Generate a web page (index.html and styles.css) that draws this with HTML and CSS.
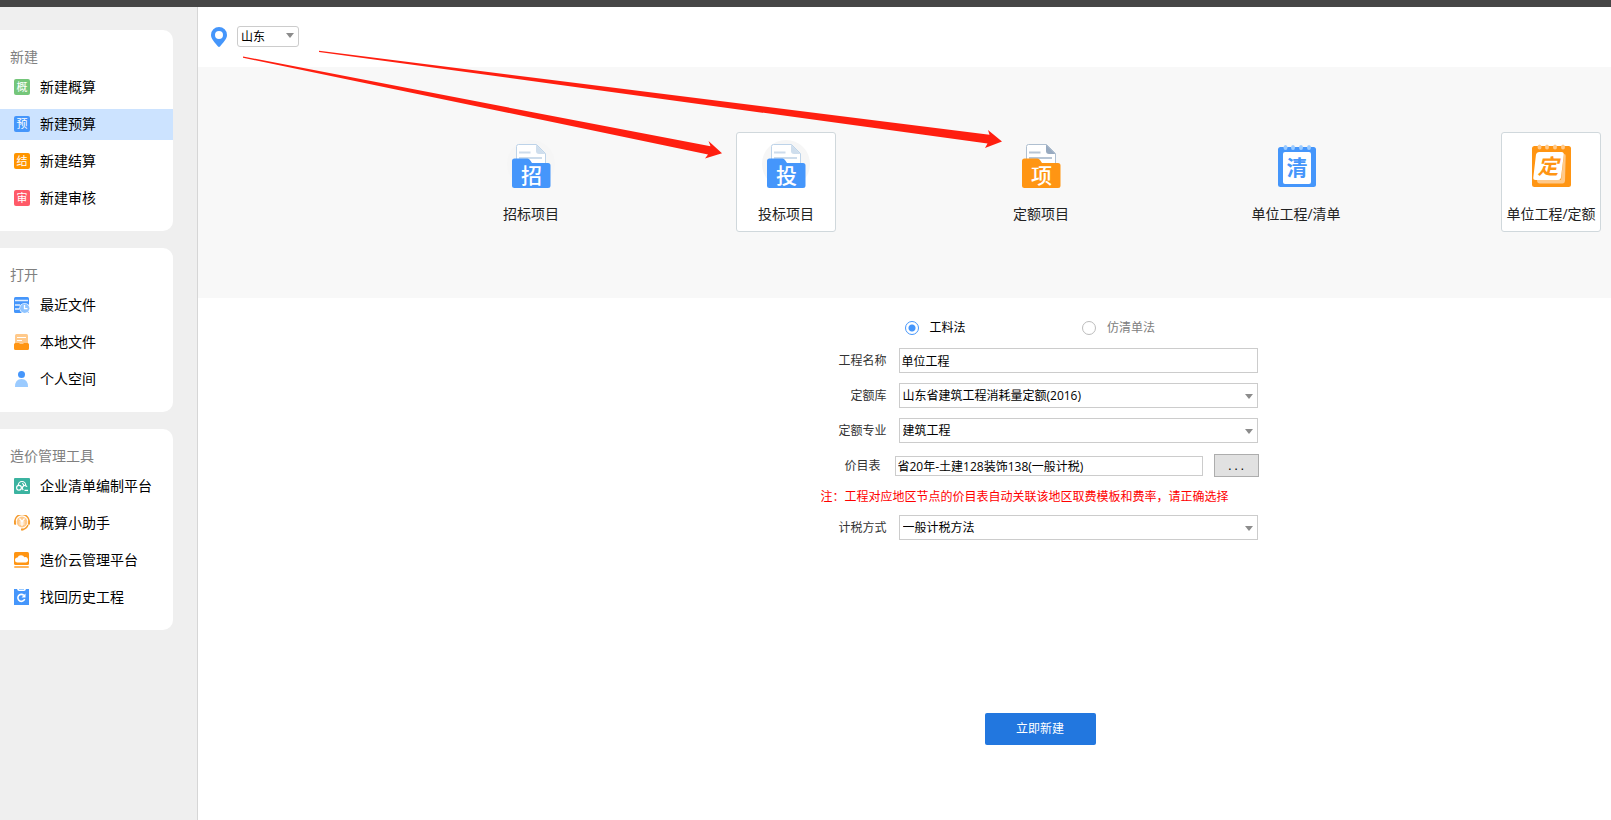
FILE: index.html
```html
<!DOCTYPE html>
<html lang="zh-CN">
<head>
<meta charset="utf-8">
<title>新建预算</title>
<link rel="stylesheet" href="styles.css">
</head>
<body>
<svg class="defs" width="0" height="0" aria-hidden="true">
  <defs>
    <symbol id="folder" viewBox="0 0 48 48">
      <circle class="halo" cx="24" cy="24" r="24"/>
      <path class="sheet" d="M9.500 28V6.500q0-2 2-2h18l9 9V28z"/>
      <path class="fold" d="M29 4.500V11q0 3 3 3h6.500z"/>
      <path class="rule" d="M12 12.500h11.500M12 18h23"/>
      <path class="front" d="M5 21q0-2.500 2.500-2.500h13q1.500 0 2.500 1.500l2 3h16q2.500 0 2.500 2.500v20q0 2.500-2.500 2.500H7.500Q5 48 5 45.500z"/>
    </symbol>
  </defs>
</svg>
<div class="titlebar"></div>
<div class="app">
  <aside class="sidebar">
    <nav class="panel" aria-label="新建">
      <h2 class="panel-title">新建</h2>
      <a class="item" href="#"><span class="badge green">概</span>新建概算</a>
      <a class="item active" href="#"><span class="badge blue">预</span>新建预算</a>
      <a class="item" href="#"><span class="badge orange">结</span>新建结算</a>
      <a class="item" href="#"><span class="badge red">审</span>新建审核</a>
    </nav>
    <nav class="panel" aria-label="打开">
      <h2 class="panel-title">打开</h2>
      <a class="item" href="#"><svg class="icon" viewBox="0 0 16 16"><rect width="15" height="16" rx="1.500" fill="#4596fb"/><path d="M1 3.500h13M1 8h5M1 12h4" stroke="#e3effe" stroke-width="1.300"/><circle cx="10.700" cy="11.300" r="5.400" fill="#fff"/><circle cx="10.700" cy="11.300" r="4.700" fill="#8fc4ff"/><path d="M10.500 8v3.700h3" fill="none" stroke="#fff" stroke-width="1.300"/></svg>最近文件</a>
      <a class="item" href="#"><svg class="icon" viewBox="0 0 16 16"><rect x="1" width="13" height="11" rx="1.500" fill="#ffc98a"/><path d="M3 3.500h9M3 6.500h5" stroke="#fff"/><path d="M0 10.500Q0 9 1.500 9H5l1 1h3l1-1h3.500Q15 9 15 10.500v4q0 1.500-1.500 1.500h-12Q0 16 0 14.500z" fill="#ff9513"/></svg>本地文件</a>
      <a class="item" href="#"><svg class="icon" viewBox="0 0 16 16"><path d="M1 16q0-8 6.500-8T14 16z" fill="#9bcbff"/><circle cx="7.500" cy="3.500" r="3.500" fill="#4596fb"/></svg>个人空间</a>
    </nav>
    <nav class="panel" aria-label="造价管理工具">
      <h2 class="panel-title">造价管理工具</h2>
      <a class="item" href="#"><svg class="icon" viewBox="0 0 16 16"><rect width="16" height="16" rx="1" fill="#3bb3a0"/><g fill="none" stroke="#fff" stroke-width="1.200"><path d="M4.300 7.200a3.700 3.700 0 0 1 7.400 0"/><circle cx="5" cy="9.800" r="2.400"/><path d="M8 5.500a1.800 1.800 0 0 1 1 3.200M9.300 12a2.500 2.500 0 1 1 3.700-3.200M10.500 12.300H14"/></g></svg>企业清单编制平台</a>
      <a class="item" href="#"><svg class="icon" viewBox="0 0 16 16"><circle cx="8" cy="7" r="5.400" fill="#ffc98a"/><path d="M1.700 9.500A7 7 0 1 1 14.300 9.500M14 10q-1.500 4-6 4.600" fill="none" stroke="#f59b2d" stroke-width="1.400"/><path d="M0 5.500h1.700v4H0zM14.300 5.500H16v4h-1.700zM7 13.500h2.500v2H7z" fill="#f59b2d"/><path d="M5.500 3.500 8 6.500l2.500-3M5.500 7h5M5.500 9h5M8 6.500v4.500" fill="none" stroke="#fff" stroke-width="1.200"/></svg>概算小助手</a>
      <a class="item" href="#"><svg class="icon" viewBox="0 0 16 16"><rect width="15" height="13" rx="1.500" fill="#ff9513"/><path d="M3.500 10.500a2.500 2.500 0 0 1 0-5 4 4 0 0 1 7-.300 2.700 2.700 0 0 1 1.500 5.300z" fill="#fff"/><rect y="14" width="15" height="2" rx="1" fill="#ffb55c"/></svg>造价云管理平台</a>
      <a class="item" href="#"><svg class="icon" viewBox="0 0 16 16"><path d="M0 0h15v16H0z" fill="#4596fb"/><path d="M3 0q.500 2 2 2h5q1.500 0 2-2z" fill="#fff"/><path d="M5 0h5v1H5z" fill="#9bcbff"/><path d="M9.800 6.300A3.500 3.500 0 1 0 10.700 10" fill="none" stroke="#fff" stroke-width="1.600"/><path d="M11.500 4.500v4H7.500z" fill="#fff"/></svg>找回历史工程</a>
    </nav>
  </aside>

  <main class="main">
    <header class="region">
      <svg class="pin" viewBox="0 0 16 20" aria-hidden="true"><path fill-rule="evenodd" d="M8 0a8 8 0 0 1 8 8c0 4.500-5 8.500-6.800 11.300q-1.200 1.400-2.400 0C5 16.500 0 12.500 0 8a8 8 0 0 1 8-8zm0 4a4 4 0 1 0 0 8 4 4 0 0 0 0-8z" fill="#4596fb"/></svg>
      <span class="select small"><select aria-label="地区"><option>山东</option></select></span>
    </header>

    <section class="kinds">
      <button class="kind blue-kind" type="button">
        <svg class="kind-icon" viewBox="0 0 48 48"><use href="#folder"/><text class="glyph" x="24.500" y="43">招</text></svg>招标项目</button>
      <button class="kind blue-kind card" type="button">
        <svg class="kind-icon" viewBox="0 0 48 48"><use href="#folder"/><text class="glyph" x="24.500" y="43">投</text></svg>投标项目</button>
      <button class="kind orange-kind" type="button">
        <svg class="kind-icon" viewBox="0 0 48 48"><use href="#folder"/><text class="glyph" x="24.500" y="43">项</text></svg>定额项目</button>
      <button class="kind" type="button">
        <svg class="kind-icon" viewBox="0 0 48 48"><rect x="6" y="7" width="38" height="40" rx="2.500" fill="#4596fb"/><rect x="11" y="12" width="28" height="32" rx="2" fill="#fff"/><g fill="#9bcbff"><ellipse cx="13.500" cy="7.500" rx="2" ry="2.500"/><ellipse cx="21" cy="7.500" rx="2" ry="2.500"/><ellipse cx="29" cy="7.500" rx="2" ry="2.500"/><ellipse cx="37" cy="7.500" rx="2" ry="2.500"/></g><text class="glyph blue-glyph" x="25" y="35">清</text></svg>单位工程/清单</button>
      <button class="kind card" type="button">
        <svg class="kind-icon" viewBox="0 0 48 48"><rect x="5" y="6" width="39" height="41" rx="2.500" fill="#ff9513"/><path d="M10 40h24l3-26q2 0 1.700 2L38 41q-.300 2.500-2.500 2.500H13q-3 0-3-3.500z" fill="#ffc98a"/><path d="M12 12h22.500q2.500 0 2.300 2.500L34 37.500q-.300 2.500-2.700 2.500H8.500Q6 40 6.300 37.500L9 14.500Q9.500 12 12 12z" fill="#fff"/><g fill="#ffc98a"><ellipse cx="12.500" cy="7" rx="2" ry="2.500"/><ellipse cx="20" cy="7" rx="2" ry="2.500"/><ellipse cx="28" cy="7" rx="2" ry="2.500"/><ellipse cx="36" cy="7" rx="2" ry="2.500"/></g><text class="glyph orange-glyph" x="21" y="34">定</text></svg>单位工程/定额</button>
    </section>

    <form class="form">
      <div class="methods">
        <label class="method"><input type="radio" name="method" checked>工料法</label>
        <label class="method muted"><input type="radio" name="method">仿清单法</label>
      </div>
      <div class="row"><label for="name">工程名称</label><input id="name" class="text" type="text" value="单位工程"></div>
      <div class="row"><label for="lib">定额库</label><span class="select"><select id="lib"><option>山东省建筑工程消耗量定额(2016)</option></select></span></div>
      <div class="row"><label for="major">定额专业</label><span class="select"><select id="major"><option>建筑工程</option></select></span></div>
      <div class="row price"><label for="price">价目表</label><input id="price" class="text" type="text" value="省20年-土建128装饰138(一般计税)"><button class="browse" type="button" aria-label="选择价目表">. . .</button></div>
      <p class="note">注：工程对应地区节点的价目表自动关联该地区取费模板和费率，请正确选择</p>
      <div class="row"><label for="tax">计税方式</label><span class="select"><select id="tax"><option>一般计税方法</option></select></span></div>
      <button class="create" type="button">立即新建</button>
    </form>

    <svg class="arrows" width="820" height="170" viewBox="198 7 820 170" aria-hidden="true">
      <path d="M243 56.500 710.500 146.300 708.500 141 722 153.300 705 158.500 708 154.500 243 57.700z"/>
      <path d="M319 50.700 989.500 134.700 988 130 1002 141.500 985 148 987.500 143.500 319 51.900z"/>
    </svg>
  </main>
</div>
</body>
</html>
```
FILE: styles.css
```css
* { box-sizing: border-box; }

body {
  margin: 0;
  min-height: 100vh;
  display: flex;
  flex-direction: column;
  font-family: "Open Sans", "Noto Sans CJK SC", sans-serif;
  font-size: 12px;
  line-height: 16px;
  color: #000;
  background: #fff;
}

button, input, select { font: inherit; color: inherit; }

.defs { position: absolute; }

.titlebar { height: 7px; background: #464646; }

.app { flex: 1; display: flex; }

/* Sidebar */
.sidebar {
  width: 198px;
  flex: none;
  padding: 23px 24px 23px 0;
  display: flex;
  flex-direction: column;
  gap: 17px;
  background: #efefef;
  border-right: 1px solid #d6d6d6;
}

.panel {
  display: flex;
  flex-direction: column;
  gap: 6px;
  padding: 18px 0 17px;
  border-radius: 0 10px 10px 0;
  background: #fff;
}

.panel-title {
  margin: 0;
  padding-left: 10px;
  font-size: 14px;
  font-weight: 400;
  line-height: 18px;
  color: #808080;
}

.item {
  display: flex;
  align-items: center;
  gap: 10px;
  height: 31px;
  padding: 0 0 1px 14px;
  font-size: 14px;
  color: #000;
  text-decoration: none;
}

.item.active { background: #cce3ff; }

.icon { width: 16px; height: 16px; flex: none; }

.badge {
  width: 16px;
  height: 16px;
  flex: none;
  border-radius: 2px;
  font-size: 11px;
  line-height: 16px;
  text-align: center;
  color: #fff;
}

.green { background: #74c67a; }
.blue { background: #4596fb; }
.orange { background: #ff9500; }
.red { background: #ff5a68; }

/* Main area */
.main {
  position: relative;
  flex: 1;
  min-width: 0;
  display: flex;
  flex-direction: column;
}

.region {
  display: flex;
  align-items: center;
  gap: 10px;
  height: 60px;
  padding: 0 13px 1px;
}

.pin { width: 16px; height: 20px; }

.kinds {
  display: flex;
  justify-content: space-between;
  height: 231px;
  padding: 65px 10px 0 283px;
  background: #f8f8f8;
}

.kind {
  display: flex;
  flex-direction: column;
  align-items: center;
  gap: 16px;
  width: 100px;
  height: 100px;
  padding: 7px 0 0;
  border: 1px solid transparent;
  border-radius: 3px;
  background: none;
  font-size: 14px;
  line-height: 20px;
  white-space: nowrap;
  color: #222;
}

.card { border-color: #d0d8dc; background: #fff; }

.kind-icon { width: 48px; height: 48px; }

.halo { fill: var(--halo, none); }
.sheet { fill: #fff; stroke: var(--edge); }
.fold { fill: var(--fold); }
.rule { fill: none; stroke: var(--rule); stroke-width: 2; }
.front { fill: var(--front); }

.blue-kind { --halo: #f6f6f6; --edge: #bdd3e9; --fold: #cfdeed; --rule: #cddceb; --front: #4596fb; }
.orange-kind { --edge: #afbfd0; --fold: #98aac0; --rule: #b7c5d5; --front: #ff9513; }

.glyph { font-size: 21px; font-weight: 500; text-anchor: middle; fill: #fff; }
.blue-glyph { font-weight: 700; fill: #4596fb; }
.orange-glyph { font-weight: 700; font-style: italic; fill: #ff9513; }

/* Form */
.form {
  display: flex;
  flex-direction: column;
  gap: 10px;
  width: 439px;
  margin: 20px 0 0 calc(50% - 84px);
}

.methods {
  display: flex;
  height: 20px;
  padding-left: 84px;
}

.method {
  display: flex;
  align-items: center;
  gap: 11px;
  width: 180px;
}

.muted { color: #808080; }

.method input {
  appearance: none;
  width: 14px;
  height: 14px;
  margin: 0;
  border: 1px solid #bcbcbc;
  border-radius: 50%;
  background: #fff;
}

.method input:checked {
  border-color: #4596fb;
  background: radial-gradient(circle, #4596fb 3px, #fff 4px);
}

.row {
  display: flex;
  align-items: center;
  gap: 12px;
  height: 25px;
  padding-right: 2px;
}

.row label {
  width: 66px;
  flex: none;
  text-align: right;
  color: #333;
}

.text {
  flex: 1;
  min-width: 0;
  height: 25px;
  padding: 0 2px;
  border: 1px solid #ccc;
  background: #fff;
}

.select {
  position: relative;
  flex: 1;
  display: flex;
  height: 25px;
}

.select select {
  appearance: none;
  width: 100%;
  padding: 0 20px 0 3px;
  border: 1px solid #ccc;
  border-radius: 0;
  background: #fff;
}

.select::after {
  content: "";
  position: absolute;
  right: 5px;
  top: 50%;
  border: 4px solid transparent;
  border-top: 5px solid #8c8c8c;
  border-bottom: 0;
  margin-top: -2px;
  pointer-events: none;
}

.small { flex: none; width: 62px; height: 21px; }
.small select { border-radius: 3px; }
.small::after { margin-top: -4px; }

.price { gap: 0; padding-right: 1px; }
.price label { width: 60px; margin-right: 14px; }
.price .text { height: 20px; margin-right: 11px; }

.browse {
  width: 45px;
  height: 23px;
  padding: 0;
  border: 1px solid #adadad;
  background: #e1e1e1;
}

.note {
  margin: 0;
  line-height: 17px;
  white-space: nowrap;
  color: #f00;
}

.create {
  align-self: center;
  width: 111px;
  height: 32px;
  margin-top: 163px;
  border: 0;
  border-radius: 2px;
  background: #2277df;
  color: #fff;
}

.arrows {
  position: absolute;
  left: 0;
  top: 0;
  fill: #ff1f10;
  pointer-events: none;
}
```
